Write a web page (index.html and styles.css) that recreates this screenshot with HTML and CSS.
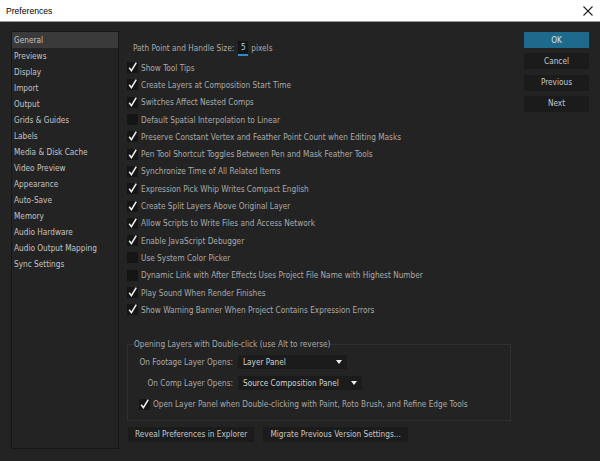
FILE: index.html
```html
<!DOCTYPE html>
<html lang="en">
<head>
  <meta charset="UTF-8">
  <title>Preferences</title>
  <link rel="stylesheet" href="styles.css">
</head>
<body>

  <div class="window">
    <div class="titlebar">
      <span class="title">Preferences</span>
      <svg class="close" width="10" height="10" viewBox="0 0 10 10">
        <path d="M0.5 0.5 L9.5 9.5 M9.5 0.5 L0.5 9.5" stroke="#222" stroke-width="1.1" fill="none"/>
      </svg>
    </div>

    <div class="content">
      <ul class="nav">
        <li class="active">General</li>
        <li>Previews</li>
        <li>Display</li>
        <li>Import</li>
        <li>Output</li>
        <li>Grids &amp; Guides</li>
        <li>Labels</li>
        <li>Media &amp; Disk Cache</li>
        <li>Video Preview</li>
        <li>Appearance</li>
        <li>Auto-Save</li>
        <li>Memory</li>
        <li>Audio Hardware</li>
        <li>Audio Output Mapping</li>
        <li>Sync Settings</li>
      </ul>

      <div class="main">
        <div class="handle-size">
          Path Point and Handle Size:
          <span class="num">5</span>
          pixels
        </div>

        <div class="checks">
          <label class="check"><span class="box on"><svg viewBox="0 0 11 11"><path d="M2.2 5.8 L4.4 8.6 L9.3 0.6"/></svg></span>Show Tool Tips</label>
          <label class="check"><span class="box on"><svg viewBox="0 0 11 11"><path d="M2.2 5.8 L4.4 8.6 L9.3 0.6"/></svg></span>Create Layers at Composition Start Time</label>
          <label class="check"><span class="box on"><svg viewBox="0 0 11 11"><path d="M2.2 5.8 L4.4 8.6 L9.3 0.6"/></svg></span>Switches Affect Nested Comps</label>
          <label class="check"><span class="box"></span>Default Spatial Interpolation to Linear</label>
          <label class="check"><span class="box on"><svg viewBox="0 0 11 11"><path d="M2.2 5.8 L4.4 8.6 L9.3 0.6"/></svg></span>Preserve Constant Vertex and Feather Point Count when Editing Masks</label>
          <label class="check"><span class="box on"><svg viewBox="0 0 11 11"><path d="M2.2 5.8 L4.4 8.6 L9.3 0.6"/></svg></span>Pen Tool Shortcut Toggles Between Pen and Mask Feather Tools</label>
          <label class="check"><span class="box on"><svg viewBox="0 0 11 11"><path d="M2.2 5.8 L4.4 8.6 L9.3 0.6"/></svg></span>Synchronize Time of All Related Items</label>
          <label class="check"><span class="box on"><svg viewBox="0 0 11 11"><path d="M2.2 5.8 L4.4 8.6 L9.3 0.6"/></svg></span>Expression Pick Whip Writes Compact English</label>
          <label class="check"><span class="box on"><svg viewBox="0 0 11 11"><path d="M2.2 5.8 L4.4 8.6 L9.3 0.6"/></svg></span>Create Split Layers Above Original Layer</label>
          <label class="check"><span class="box on"><svg viewBox="0 0 11 11"><path d="M2.2 5.8 L4.4 8.6 L9.3 0.6"/></svg></span>Allow Scripts to Write Files and Access Network</label>
          <label class="check"><span class="box on"><svg viewBox="0 0 11 11"><path d="M2.2 5.8 L4.4 8.6 L9.3 0.6"/></svg></span>Enable JavaScript Debugger</label>
          <label class="check"><span class="box"></span>Use System Color Picker</label>
          <label class="check"><span class="box"></span>Dynamic Link with After Effects Uses Project File Name with Highest Number</label>
          <label class="check"><span class="box on"><svg viewBox="0 0 11 11"><path d="M2.2 5.8 L4.4 8.6 L9.3 0.6"/></svg></span>Play Sound When Render Finishes</label>
          <label class="check"><span class="box on"><svg viewBox="0 0 11 11"><path d="M2.2 5.8 L4.4 8.6 L9.3 0.6"/></svg></span>Show Warning Banner When Project Contains Expression Errors</label>
        </div>

        <fieldset class="group">
          <legend>Opening Layers with Double-click (use Alt to reverse)</legend>
          <div class="opens">
            <span class="opens-label">On Footage Layer Opens:</span>
            <span class="select select-footage">Layer Panel<i class="caret"></i></span>
            <span class="opens-label">On Comp Layer Opens:</span>
            <span class="select select-comp">Source Composition Panel<i class="caret"></i></span>
          </div>
          <label class="check check-inner"><span class="box on"><svg viewBox="0 0 11 11"><path d="M2.2 5.8 L4.4 8.6 L9.3 0.6"/></svg></span>Open Layer Panel when Double-clicking with Paint, Roto Brush, and Refine Edge Tools</label>
        </fieldset>

        <div class="footer-buttons">
          <button class="btn">Reveal Preferences in Explorer</button>
          <button class="btn">Migrate Previous Version Settings...</button>
        </div>
      </div>

      <div class="actions">
        <button class="btn btn-primary">OK</button>
        <button class="btn">Cancel</button>
        <button class="btn">Previous</button>
        <button class="btn">Next</button>
      </div>
    </div>
  </div>

</body>
</html>
```

FILE: styles.css
```css
body {
  margin: 0;
  background: #232323;
  font-family: 'DejaVu Sans Condensed', 'Liberation Sans', sans-serif;
  font-size: 8.2px;
  color: #aaaaaa;
  white-space: nowrap;
}

.window {
  width: 600px;
  height: 461px;
  display: flex;
  flex-direction: column;
}

.titlebar {
  height: 21px;
  background: #fff;
  border-bottom: 1px solid #9a9a9a;
  display: flex;
  align-items: center;
  justify-content: space-between;
  padding: 0 7px 0 6px;
}

.title {
  font-family: 'Liberation Sans', sans-serif;
  font-size: 8.6px;
  color: #000;
}

.content {
  flex: 1;
  display: flex;
  padding: 9px 11px 0 11px;
}

/* left category list */
.nav {
  list-style: none;
  margin: 0;
  padding: 0;
  width: 106px;
  height: 416px;
  border: 1px solid #171717;
  color: #c4c4c4;
}

.nav li {
  height: 16px;
  line-height: 16px;
  padding-left: 2px;
}

.nav li.active {
  background: #3a3a3a;
}

.main {
  flex: 1;
  margin: 0 13px 0 8px;
  display: flex;
  flex-direction: column;
}

.handle-size {
  margin-top: 9px;
  height: 16px;
  line-height: 16px;
  padding-left: 6px;
  display: flex;
  align-items: center;
  gap: 3px;
}

.num {
  display: inline-block;
  width: 10px;
  height: 13px;
  line-height: 13px;
  background: #151515;
  color: #a8d6f5;
  text-align: center;
  border-bottom: 2px solid #2b8bd6;
  margin-left: 1px;
}

.checks {
  margin-top: 3px;
  display: flex;
  flex-direction: column;
}

.check {
  height: 17.3px;
  display: flex;
  align-items: center;
  gap: 3px;
}

.box {
  width: 11px;
  height: 11px;
  background: #151515;
  flex: none;
}

.box svg {
  width: 11px;
  height: 11px;
  overflow: visible;
  display: block;
}

.box svg path {
  fill: none;
  stroke: #f2f2f2;
  stroke-width: 1.5;
}

/* opening layers group */
.group {
  margin: 19px 0 0 0;
  padding: 0 0 9px 0;
  border: 1px solid #2f2f2f;
}

.group legend {
  margin-left: 6px;
  padding: 0;
  line-height: 14px;
}

.opens {
  display: grid;
  grid-template-columns: 105px auto;
  column-gap: 5px;
  row-gap: 7px;
  margin-top: 4px;
  justify-items: start;
}

.opens-label {
  justify-self: end;
  line-height: 14px;
}

.select {
  height: 14px;
  line-height: 14px;
  background: #1b1b1b;
  color: #d2d2d2;
  padding-left: 5px;
  box-sizing: border-box;
  display: flex;
  align-items: center;
  justify-content: space-between;
}

.select-footage {
  width: 109px;
}

.select-comp {
  width: 124px;
}

.caret {
  width: 0;
  height: 0;
  border-left: 3.5px solid transparent;
  border-right: 3.5px solid transparent;
  border-top: 4px solid #eee;
  margin-right: 5px;
}

.check-inner {
  margin-top: 7px;
  padding-left: 11px;
  height: 14px;
}

.footer-buttons {
  margin-top: 6px;
  display: flex;
  gap: 8px;
}

.btn {
  font-family: inherit;
  font-size: 8.2px;
  color: #c8c8c8;
  background: #1b1b1b;
  border: none;
  height: 15px;
  padding: 0 7px;
  line-height: 15px;
}

.footer-buttons .btn {
  margin-left: 1px;
}

.actions {
  width: 65px;
  display: flex;
  flex-direction: column;
  gap: 5.3px;
  padding-top: 1px;
}

.actions .btn {
  height: 16px;
  padding: 0;
  text-align: center;
}

.btn-primary {
  background: #1e6a8c;
  color: #d8e6ee;
}
```
